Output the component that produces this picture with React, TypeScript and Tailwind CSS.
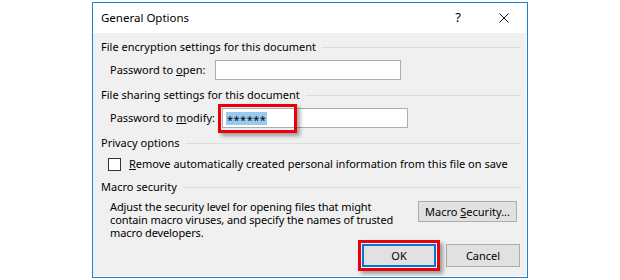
import React from 'react';

const font = { fontFamily: '"Noto Sans", "Open Sans", sans-serif' };

function SectionHeader({ title }: { title: string }) {
  return (
    <div className="flex items-center h-[14px] gap-[6px]">
      <span className="whitespace-nowrap leading-[14px]">{title}</span>
      <div className="flex-1 h-px bg-[#dcdcdc]" />
    </div>
  );
}

export default function App() {
  return (
    <div className="w-[620px] h-[280px] bg-white pl-[92px] pt-[2px] text-[11px] text-black" style={font}>
      <div className="w-[436px] h-[276px] border border-[#1a7fd6] flex flex-col bg-white">
        {/* Title bar */}
        <div className="h-[30px] flex items-center pl-[8px] shrink-0">
          <span className="flex-1 leading-[14px] text-[11.5px]">General Options</span>
          <span className="w-[10px] text-center mr-[36px] text-[13px]">?</span>
          <svg width="10" height="10" viewBox="0 0 10 10" className="mr-[18px]">
            <path d="M0.5 0.5 L9.5 9.5 M9.5 0.5 L0.5 9.5" stroke="#111" strokeWidth="1" fill="none" />
          </svg>
        </div>

        {/* Body */}
        <div className="flex-1 bg-[#f0f0f0] pl-[8px] pr-[5px] pt-[7px] flex flex-col mb-px mr-px">
          <SectionHeader title="File encryption settings for this document" />
          <div className="flex items-center mt-[6px] pl-[9px] h-[20px]">
            <span className="w-[105px] shrink-0 whitespace-nowrap">
              Password to <span className="underline">o</span>pen:
            </span>
            <div className="w-[186px] h-[20px] bg-white border border-[#adadad]" />
          </div>

          <div className="mt-[8px]">
            <SectionHeader title="File sharing settings for this document" />
          </div>
          <div className="flex items-center mt-[6px] pl-[9px] h-[20px]">
            <span className="w-[112px] shrink-0 whitespace-nowrap">
              Password to <span className="underline">m</span>odify:
            </span>
            <div className="relative w-[186px] h-[20px] bg-white border border-[#adadad] flex items-center pl-[3px]">
              <span className="bg-[#99c9ef] h-[13px] leading-[15px] text-[11px] px-[1px] tracking-[0.5px]">******</span>
              <div className="absolute left-[-5px] top-[-5px] w-[79px] h-[29px] border-[3px] border-[#e8000b] shadow-[3px_3px_4px_rgba(0,0,0,0.35)]" />
            </div>
          </div>

          <div className="mt-[8px]">
            <SectionHeader title="Privacy options" />
          </div>
          <div className="flex items-center mt-[8px] pl-[7px] h-[13px] gap-[8px]">
            <div className="w-[13px] h-[13px] shrink-0 border border-[#333] bg-white" />
            <span className="whitespace-nowrap">
              <span className="underline">R</span>emove automatically created personal information from this file on save
            </span>
          </div>

          <div className="mt-[9px]">
            <SectionHeader title="Macro security" />
          </div>
          <div className="flex mt-[6px] pl-[9px]">
            <div className="flex-1 flex flex-col whitespace-nowrap tracking-[-0.1px]">
              <div className="h-[13px] leading-[13px]">Adjust the security level for opening files that might</div>
              <div className="h-[13px] leading-[13px]">contain macro viruses, and specify the names of trusted</div>
              <div className="h-[13px] leading-[13px]">macro developers.</div>
            </div>
            <button className="w-[99px] h-[21px] shrink-0 mt-px mr-[4px] bg-[#e1e1e1] border border-[#adadad] text-[11px] leading-none whitespace-nowrap">
              Macro <span className="underline">S</span>ecurity...
            </button>
          </div>

          <div className="flex justify-end gap-[10px] mt-[5px] pr-px">
            <div className="relative">
              <button className="w-[74px] h-[23px] bg-[#e1e1e1] border-2 border-[#0078d7] text-[11px] leading-none">
                OK
              </button>
              <div className="absolute left-[-4px] top-[-4px] w-[82px] h-[31px] border-[3px] border-[#e8000b] shadow-[3px_3px_4px_rgba(0,0,0,0.35)]" />
            </div>
            <button className="w-[74px] h-[23px] bg-[#e1e1e1] border border-[#adadad] text-[11px] leading-none">
              Cancel
            </button>
          </div>
        </div>
      </div>
    </div>
  );
}
